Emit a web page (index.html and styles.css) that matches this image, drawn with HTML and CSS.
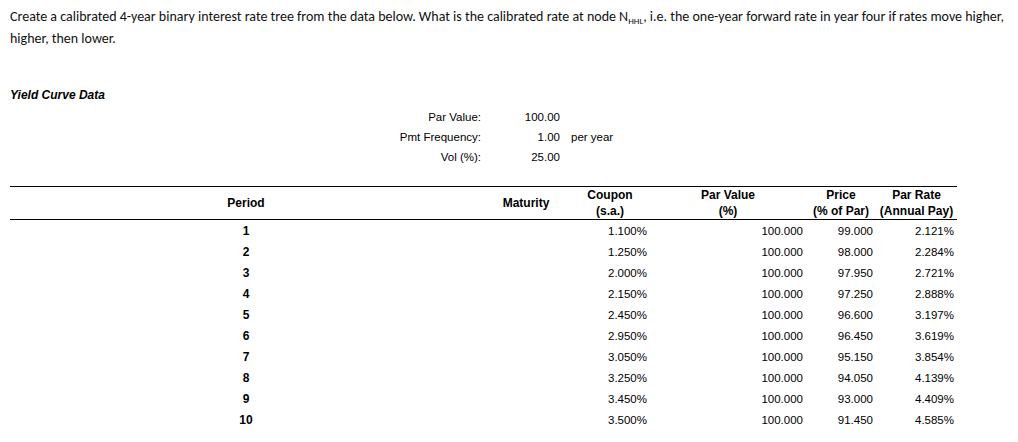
FILE: index.html
```html
<!DOCTYPE html>
<html>
<head>
<meta charset="utf-8">
<link rel="stylesheet" href="styles.css">
</head>
<body>
<p class="prompt"><span>Create a calibrated 4-year binary interest rate tree from the data below. What is the calibrated rate at node N</span><sub class="node">HHL</sub><span>, i.e. the one-year forward rate in year four if rates move higher,</span> <span>higher, then lower.</span></p>

<h2 class="section-title">Yield Curve Data</h2>

<div class="params">
  <span class="param-label">Par Value:</span><span class="param-value">100.00</span><span class="param-unit"></span>
  <span class="param-label">Pmt Frequency:</span><span class="param-value">1.00</span><span class="param-unit">per year</span>
  <span class="param-label">Vol (%):</span><span class="param-value">25.00</span><span class="param-unit"></span>
</div>

<table class="curve">
  <colgroup>
    <col class="c-period"><col class="c-maturity"><col class="c-coupon"><col class="c-par"><col class="c-price"><col class="c-rate">
  </colgroup>
  <thead>
    <tr>
      <th>Period</th>
      <th>Maturity</th>
      <th>Coupon<br>(s.a.)</th>
      <th>Par Value<br>(%)</th>
      <th>Price<br>(% of Par)</th>
      <th>Par Rate<br>(Annual Pay)</th>
    </tr>
  </thead>
  <tbody>
    <tr><td class="period">1</td><td></td><td class="num">1.100%</td><td class="num">100.000</td><td class="num">99.000</td><td class="num">2.121%</td></tr>
    <tr><td class="period">2</td><td></td><td class="num">1.250%</td><td class="num">100.000</td><td class="num">98.000</td><td class="num">2.284%</td></tr>
    <tr><td class="period">3</td><td></td><td class="num">2.000%</td><td class="num">100.000</td><td class="num">97.950</td><td class="num">2.721%</td></tr>
    <tr><td class="period">4</td><td></td><td class="num">2.150%</td><td class="num">100.000</td><td class="num">97.250</td><td class="num">2.888%</td></tr>
    <tr><td class="period">5</td><td></td><td class="num">2.450%</td><td class="num">100.000</td><td class="num">96.600</td><td class="num">3.197%</td></tr>
    <tr><td class="period">6</td><td></td><td class="num">2.950%</td><td class="num">100.000</td><td class="num">96.450</td><td class="num">3.619%</td></tr>
    <tr><td class="period">7</td><td></td><td class="num">3.050%</td><td class="num">100.000</td><td class="num">95.150</td><td class="num">3.854%</td></tr>
    <tr><td class="period">8</td><td></td><td class="num">3.250%</td><td class="num">100.000</td><td class="num">94.050</td><td class="num">4.139%</td></tr>
    <tr><td class="period">9</td><td></td><td class="num">3.450%</td><td class="num">100.000</td><td class="num">93.000</td><td class="num">4.409%</td></tr>
    <tr><td class="period">10</td><td></td><td class="num">3.500%</td><td class="num">100.000</td><td class="num">91.450</td><td class="num">4.585%</td></tr>
  </tbody>
</table>
</body>
</html>
```

FILE: styles.css
```css
html, body {
  margin: 0;
  padding: 0;
  background: #ffffff;
}

body {
  font-family: "Liberation Sans", Arial, sans-serif;
  font-size: 11.5px;
  color: #000;
}

.prompt {
  margin: 6px 0 0 0;
  padding: 0 8px 0 10px;
  font-family: Carlito, Lato, "Open Sans", sans-serif;
  font-size: 14px;
  line-height: 22px;
  color: #111;
}

.node {
  font-size: 9px;
  vertical-align: -3px;
  line-height: 0;
}

.section-title {
  margin: 37px 0 0 10px;
  font-size: 12px;
  font-weight: bold;
  font-style: italic;
  line-height: 16px;
}

.params {
  margin-top: 4px;
  display: grid;
  grid-template-columns: 481px 79px auto;
  grid-auto-rows: 20px;
  align-items: center;
}

.param-label,
.param-value {
  text-align: right;
}

.param-unit {
  padding-left: 11px;
}

.curve {
  margin: 19px 0 0 10px;
  border-collapse: collapse;
  table-layout: fixed;
  width: 947px;
}

.c-period { width: 472px; }
.c-maturity { width: 88px; }
.c-coupon { width: 80px; }
.c-par { width: 156px; }
.c-price { width: 70px; }
.c-rate { width: 81px; }

.curve thead tr {
  border-top: 1px solid #000;
  border-bottom: 1px solid #000;
}

.curve th {
  font-size: 12px;
  font-weight: bold;
  text-align: center;
  vertical-align: middle;
  line-height: 16px;
  height: 31px;
  padding: 0;
  white-space: nowrap;
}

.curve td {
  height: 21px;
  padding: 0;
  vertical-align: middle;
  white-space: nowrap;
}

.curve td.period {
  font-size: 12px;
  font-weight: bold;
  text-align: center;
}

.curve td.num {
  text-align: right;
  padding-right: 3px;
}
```
